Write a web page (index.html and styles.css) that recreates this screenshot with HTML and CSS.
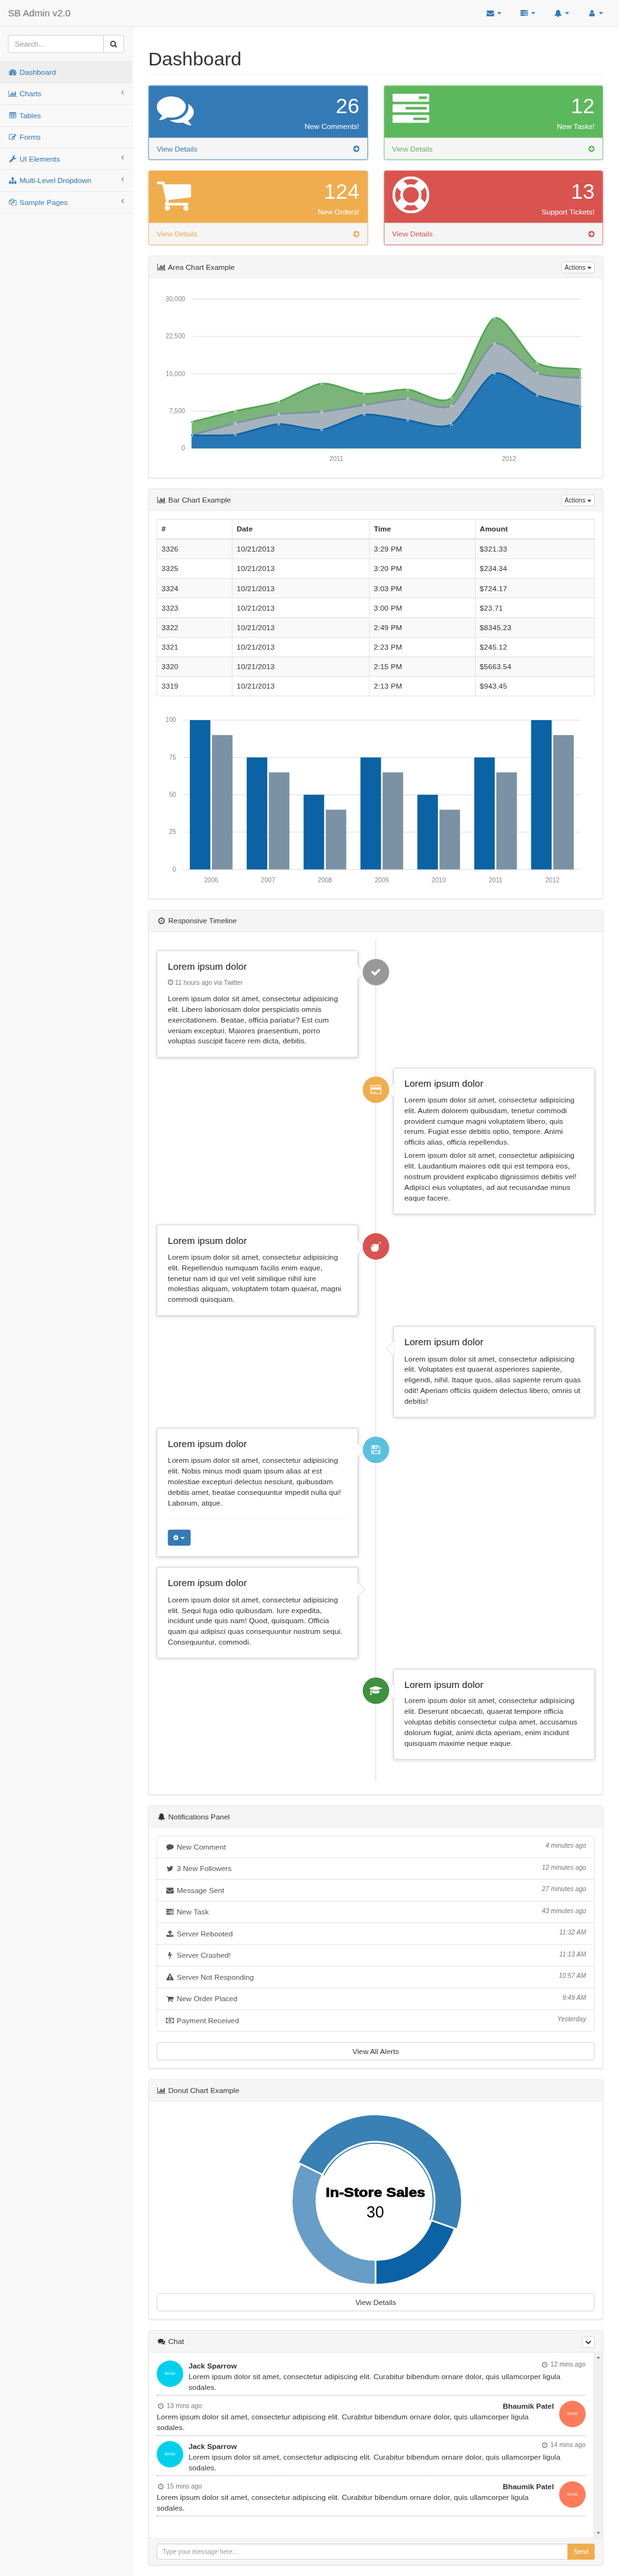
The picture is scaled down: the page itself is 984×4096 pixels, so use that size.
FILE: index.html
```html
<!DOCTYPE html>
<html lang="en">
<head>
<meta charset="utf-8">
<title>SB Admin v2.0</title>
<link rel="stylesheet" href="styles.css">
</head>
<body>
<svg class="sprite" aria-hidden="true">
<symbol id="envelope" viewBox="0 0 1792 1792"><path d="M1792 710v794q0 66-47 113t-113 47h-1472q-66 0-113-47t-47-113v-794q44 49 101 87 362 246 497 345 57 42 92.5 65.5t94.5 48 110 24.5h2q51 0 110-24.5t94.5-48 92.5-65.5q170-123 498-345 57-39 100-87zm0-294q0 79-49 151t-122 123q-376 261-468 325-10 7-42.5 31t-54 38.5-52 32.5-57.5 27-50 9h-2q-23 0-50-9t-57.5-27-52-32.5-54-38.5-42.5-31q-91-64-262-182.5t-205-142.5q-62-42-117-115.5t-55-136.5q0-78 41.5-130t118.5-52h1472q65 0 112.5 47t47.5 113z"/></symbol>
<symbol id="tasks" viewBox="0 0 1792 1792"><path d="M1024 1408h640v-128h-640v128zm-384-512h1024v-128h-1024v128zm640-512h384v-128h-384v128zm512 832v256q0 26-19 45t-45 19h-1664q-26 0-45-19t-19-45v-256q0-26 19-45t45-19h1664q26 0 45 19t19 45zm0-512v256q0 26-19 45t-45 19h-1664q-26 0-45-19t-19-45v-256q0-26 19-45t45-19h1664q26 0 45 19t19 45zm0-512v256q0 26-19 45t-45 19h-1664q-26 0-45-19t-19-45v-256q0-26 19-45t45-19h1664q26 0 45 19t19 45z"/></symbol>
<symbol id="bell" viewBox="0 0 1792 1792"><path d="M912 1696q0-16-16-16-59 0-101.5-42.5t-42.5-101.5q0-16-16-16t-16 16q0 73 51.5 124.5t124.5 51.5q16 0 16-16zm816-288q0 52-38 90t-90 38h-448q0 106-75 181t-181 75-181-75-75-181h-448q-52 0-90-38t-38-90q50-42 91-88t85-119.5 74.5-158.5 50-206 19.5-260q0-152 117-282.5t307-158.5q-8-19-8-39 0-40 28-68t68-28 68 28 28 68q0 20-8 39 190 28 307 158.5t117 282.5q0 139 19.5 260t50 206 74.5 158.5 85 119.5 91 88z"/></symbol>
<symbol id="user" viewBox="0 0 1792 1792"><path d="M1536 1399q0 109-62.5 187t-150.5 78h-854q-88 0-150.5-78t-62.5-187q0-85 8.5-160.5t31.5-152 58.5-131 94-89 134.5-34.5q131 128 313 128t313-128q76 0 134.5 34.5t94 89 58.5 131 31.5 152 8.5 160.5zm-256-887q0 159-112.5 271.5t-271.5 112.5-271.5-112.5-112.5-271.5 112.5-271.5 271.5-112.5 271.5 112.5 112.5 271.5z"/></symbol>
<symbol id="search" viewBox="64 0 1664 1792"><path d="M1216 832q0-185-131.5-316.5t-316.5-131.5-316.5 131.5-131.5 316.5 131.5 316.5 316.5 131.5 316.5-131.5 131.5-316.5zm512 832q0 52-38 90t-90 38q-54 0-90-38l-343-342q-179 124-399 124-143 0-273.5-55.5t-225-150-150-225-55.5-273.5 55.5-273.5 150-225 225-150 273.5-55.5 273.5 55.5 225 150 150 225 55.5 273.5q0 220-124 399l343 343q37 37 37 90z"/></symbol>
<symbol id="dashboard" viewBox="0 0 1792 1792"><path d="M384 1152q0-53-37.5-90.5t-90.5-37.5-90.5 37.5-37.5 90.5 37.5 90.5 90.5 37.5 90.5-37.5 37.5-90.5zm192-448q0-53-37.5-90.5t-90.5-37.5-90.5 37.5-37.5 90.5 37.5 90.5 90.5 37.5 90.5-37.5 37.5-90.5zm428 481l101-382q6-26-7.5-48.5t-38.5-29.5-48 6.5-30 39.5l-101 382q-60 5-107 43.5t-63 98.5q-20 77 20 146t117 89 146-20 89-117q16-60-6-117t-72-91zm660-33q0-53-37.5-90.5t-90.5-37.5-90.5 37.5-37.5 90.5 37.5 90.5 90.5 37.5 90.5-37.5 37.5-90.5zm-640-640q0-53-37.5-90.5t-90.5-37.5-90.5 37.5-37.5 90.5 37.5 90.5 90.5 37.5 90.5-37.5 37.5-90.5zm448 192q0-53-37.5-90.5t-90.5-37.5-90.5 37.5-37.5 90.5 37.5 90.5 90.5 37.5 90.5-37.5 37.5-90.5zm320 448q0 261-141 483-19 29-54 29h-1402q-35 0-54-29-141-221-141-483 0-182 71-348t191-286 286-191 348-71 348 71 286 191 191 286 71 348z"/></symbol>
<symbol id="chart" viewBox="0 0 2048 1792"><path d="M640 1024v384h-256v-384h256zm384-512v896h-256v-896h256zm1024 1024v128h-2048v-1536h128v1408h1920zm-640-768v640h-256v-640h256zm384-384v1024h-256v-1024h256z"/></symbol>
<symbol id="table" viewBox="0 0 1792 1792"><path fill-rule="evenodd" d="M224 128h1344q66 0 113 47t47 113v1088q0 66-47 113t-113 47h-1344q-66 0-113-47t-47-113v-1088q0-66 47-113t113-47zM192 384v256h384v-256zM704 384v256h384v-256zM1216 384v256h384v-256zM192 768v256h384v-256zM704 768v256h384v-256zM1216 768v256h384v-256zM192 1152v256h384v-256zM704 1152v256h384v-256zM1216 1152v256h384v-256z"/></symbol>
<symbol id="edit" viewBox="0 0 1792 1792"><path d="M888 1184l116-116-152-152-116 116v56h96v96h56zm440-720q-16-16-33 1l-350 350q-17 17-1 33t33-1l350-350q17-17 1-33zm80 594v190q0 119-84.5 203.5t-203.5 84.5h-832q-119 0-203.5-84.5t-84.5-203.5v-832q0-119 84.5-203.5t203.5-84.5h832q63 0 117 25 15 7 18 23 3 17-9 29l-49 49q-14 14-32 8-23-6-45-6h-832q-66 0-113 47t-47 113v832q0 66 47 113t113 47h832q66 0 113-47t47-113v-126q0-13 9-22l64-64q15-15 35-7t20 29zm-96-738l288 288-672 672h-288v-288zm444 132l-92 92-288-288 92-92q28-28 68-28t68 28l152 152q28 28 28 68t-28 68z"/></symbol>
<symbol id="wrench" viewBox="0 0 1792 1792"><path d="M448 1472q0-26-19-45t-45-19-45 19-19 45 19 45 45 19 45-19 19-45zm644-420l-682 682q-37 37-90 37-52 0-91-37l-106-108q-38-36-38-90 0-53 38-91l681-681q39 98 114.5 173.5t173.5 114.5zm634-435q0 39-23 106-47 134-164.5 217.5t-258.5 83.5q-185 0-316.5-131.5t-131.5-316.5 131.5-316.5 316.5-131.5q58 0 121.5 16.5t107.5 46.5q16 11 16 28t-16 28l-293 169v224l193 107q5-3 79-48.5t135.5-81 70.5-35.5q15 0 23.5 10t8.5 25z"/></symbol>
<symbol id="sitemap" viewBox="0 0 1792 1792"><path d="M1792 1248v320q0 40-28 68t-68 28h-320q-40 0-68-28t-28-68v-320q0-40 28-68t68-28h96v-192h-512v192h96q40 0 68 28t28 68v320q0 40-28 68t-68 28h-320q-40 0-68-28t-28-68v-320q0-40 28-68t68-28h96v-192h-512v192h96q40 0 68 28t28 68v320q0 40-28 68t-68 28h-320q-40 0-68-28t-28-68v-320q0-40 28-68t68-28h96v-192q0-52 38-90t90-38h512v-192h-96q-40 0-68-28t-28-68v-320q0-40 28-68t68-28h320q40 0 68 28t28 68v320q0 40-28 68t-68 28h-96v192h512q52 0 90 38t38 90v192h96q40 0 68 28t28 68z"/></symbol>
<symbol id="files" viewBox="0 0 1792 1792"><path d="M1696 384q40 0 68 28t28 68v1216q0 40-28 68t-68 28h-960q-40 0-68-28t-28-68v-288h-544q-40 0-68-28t-28-68v-672q0-40 20-88t48-76l408-408q28-28 76-48t88-20h416q40 0 68 28t28 68v328q68-40 128-40h416zm-544 213l-299 299h299v-299zm-640-384l-299 299h299v-299zm196 647l316-316v-416h-384v416q0 40-28 68t-68 28h-416v640h512v-256q0-40 20-88t48-76zm956 804v-1152h-384v416q0 40-28 68t-68 28h-416v640h896z"/></symbol>
<symbol id="angle" viewBox="589 0 640 1792"><path d="M1203 544q0 13-10 23l-393 393 393 393q10 10 10 23t-10 23l-50 50q-10 10-23 10t-23-10l-466-466q-10-10-10-23t10-23l466-466q10-10 23-10t23 10l50 50q10 10 10 23z"/></symbol>
<symbol id="comments" viewBox="0 0 1792 1792"><path d="M1408 768q0 139-94 257t-256.5 186.5-353.5 68.5q-86 0-176-16-124 88-278 128-36 9-86 16h-3q-11 0-20.5-8t-11.5-21q-1-3-1-6.5t.5-6.5 2-6l2.5-5 3.5-5.5 4-5 4.5-5 4-4.5q5-6 23-25t26-29.5 22.5-29 25-38.5 20.5-44q-124-72-195-177t-71-224q0-139 94-257t256.5-186.5 353.5-68.5 353.5 68.5 256.5 186.5 94 257zm384 256q0 120-71 224.5t-195 176.5q10 24 20.5 44t25 38.5 22.5 29 26 29.5 23 25q1 1 4 4.5t4.5 5 4 5 3.5 5.5l2.5 5 2 6 .5 6.5-1 6.5q-3 14-13 22t-22 7q-50-7-86-16-154-40-278-128-90 16-176 16-271 0-472-132 58 4 88 4 161 0 309-45t264-129q125-92 192-212t67-254q0-77-23-152 129 71 204 178t75 230z"/></symbol>
<symbol id="comment" viewBox="0 0 1792 1792"><path d="M1792 896q0 174-120 321.5t-326 233-450 85.5q-70 0-145-8-198 175-460 242-49 14-114 22-17 2-30.5-9t-17.5-29v-1q-3-4-.5-12t2-10 4.5-9.5l6-9 7-8.5 8-9q7-8 31-34.5t34.5-38 31-39.5 32.5-51 27-59 26-76q-157-89-247.5-220t-90.5-281q0-130 71-248.5t191-204.5 286-136.5 348-50.5q244 0 450 85.5t326 233 120 321.5z"/></symbol>
<symbol id="cart" viewBox="64 0 1664 1792"><path d="M704 1536q0 52-38 90t-90 38-90-38-38-90 38-90 90-38 90 38 38 90zm896 0q0 52-38 90t-90 38-90-38-38-90 38-90 90-38 90 38 38 90zm128-1088v512q0 24-16.5 42.5t-40.5 21.5l-1044 122q13 60 13 70 0 16-24 64h920q26 0 45 19t19 45-19 45-45 19h-1024q-26 0-45-19t-19-45q0-11 8-31.5t16-36 21.5-40 15.5-29.5l-177-823h-204q-26 0-45-19t-19-45 19-45 45-19h256q16 0 28.5 6.5t19.5 15.5 13 24.5 8 26 5.5 29.5 4.5 26h1201q26 0 45 19t19 45z"/></symbol>
<symbol id="ring" viewBox="0 0 1792 1792"><path d="M896 0q182 0 348 71t286 191 191 286 71 348-71 348-191 286-286 191-348 71-348-71-286-191-191-286-71-348 71-348 191-286 286-191 348-71zm0 128q-190 0-361 90l194 194q82-28 167-28t167 28l194-194q-171-90-361-90zm-678 1129l194-194q-28-82-28-167t28-167l-194-194q-90 171-90 361t90 361zm678 407q190 0 361-90l-194-194q-82 28-167 28t-167-28l-194 194q171 90 361 90zm0-384q159 0 271.5-112.5t112.5-271.5-112.5-271.5-271.5-112.5-271.5 112.5-112.5 271.5 112.5 271.5 271.5 112.5zm484-217l194 194q90-171 90-361t-90-361l-194 194q28 82 28 167t-28 167z"/></symbol>
<symbol id="go" viewBox="128 0 1536 1792"><path d="M1413 896q0-27-18-45l-91-91-362-362q-18-18-45-18t-45 18l-91 91q-18 18-18 45t18 45l189 189h-502q-26 0-45 19t-19 45v128q0 26 19 45t45 19h502l-189 189q-19 19-19 45t19 45l91 91q18 18 45 18t45-18l362-362 91-91q18-18 18-45zm251 0q0 209-103 385.5t-279.5 279.5-385.5 103-385.5-103-279.5-279.5-103-385.5 103-385.5 279.5-279.5 385.5-103 385.5 103 279.5 279.5 103 385.5z"/></symbol>
<symbol id="clock" viewBox="128 0 1536 1792"><path d="M1024 544v448q0 14-9 23t-23 9h-320q-14 0-23-9t-9-23v-64q0-14 9-23t23-9h224v-352q0-14 9-23t23-9h64q14 0 23 9t9 23zm416 352q0-148-73-273t-198-198-273-73-273 73-198 198-73 273 73 273 198 198 273 73 273-73 198-198 73-273zm224 0q0 209-103 385.5t-279.5 279.5-385.5 103-385.5-103-279.5-279.5-103-385.5 103-385.5 279.5-279.5 385.5-103 385.5 103 279.5 279.5 103 385.5z"/></symbol>
<symbol id="check" viewBox="0 0 1792 1792"><path d="M1671 566q0 40-28 68l-724 724-136 136q-28 28-68 28t-68-28l-136-136-362-362q-28-28-28-68t28-68l136-136q28-28 68-28t68 28l294 295 656-657q28-28 68-28t68 28l136 136q28 28 28 68z"/></symbol>
<symbol id="card" viewBox="0 0 1920 1792"><path d="M1760 128q66 0 113 47t47 113v1216q0 66-47 113t-113 47h-1600q-66 0-113-47t-47-113v-1216q0-66 47-113t113-47h1600zm-1600 128q-13 0-22.5 9.5t-9.5 22.5v224h1664v-224q0-13-9.5-22.5t-22.5-9.5h-1600zm1600 1280q13 0 22.5-9.5t9.5-22.5v-608h-1664v608q0 13 9.5 22.5t22.5 9.5h1600zm-1504-128v-128h256v128h-256zm384 0v-128h384v128h-384z"/></symbol>
<symbol id="bomb" viewBox="0 0 1792 1792"><path d="M571 589q-10-25-34-35t-49 0q-108 44-191 127t-127 191q-10 25 0 49t35 34q13 5 24 5 42 0 60-40 34-84 98.5-148.5t148.5-98.5q25-11 35-35t0-49zm942-356l46 46-244 243 68 68q19 19 19 45.5t-19 45.5l-64 64q89 161 89 343 0 143-55.5 273.5t-150 225-225 150-273.5 55.5-273.5-55.5-225-150-150-225-55.5-273.5 55.5-273.5 150-225 225-150 273.5-55.5q182 0 343 89l64-64q19-19 45.5-19t45.5 19l68 68zm8-56q-10 10-22 10-13 0-23-10l-91-90q-9-10-9-23t9-23q10-9 23-9t23 9l90 91q10 9 10 22.5t-10 22.5zm230 230q-11 9-23 9t-23-9l-90-91q-10-9-10-22.5t10-22.5q9-10 22.5-10t22.5 10l91 90q9 10 9 23t-9 23zm41-183q0 14-9 23t-23 9h-96q-14 0-23-9t-9-23 9-23 23-9h96q14 0 23 9t9 23zm-192-192v96q0 14-9 23t-23 9-23-9-9-23v-96q0-14 9-23t23-9 23 9 9 23zm151 55l-91 90q-10 10-22 10-13 0-23-10-10-9-10-22.5t10-22.5l90-91q10-9 23-9t23 9q9 10 9 23t-9 23z"/></symbol>
<symbol id="floppy" viewBox="0 0 1792 1792"><path d="M512 1536h768v-384h-768v384zm896 0h128v-896q0-14-10-38.5t-20-34.5l-281-281q-10-10-34-20t-39-10v416q0 40-28 68t-68 28h-576q-40 0-68-28t-28-68v-416h-128v1280h128v-416q0-40 28-68t68-28h832q40 0 68 28t28 68v416zm-384-928v-320q0-13-9.5-22.5t-22.5-9.5h-192q-13 0-22.5 9.5t-9.5 22.5v320q0 13 9.5 22.5t22.5 9.5h192q13 0 22.5-9.5t9.5-22.5zm640 32v928q0 40-28 68t-68 28h-1344q-40 0-68-28t-28-68v-1344q0-40 28-68t68-28h928q40 0 88 20t76 48l280 280q28 28 48 76t20 88z"/></symbol>
<symbol id="cap" viewBox="0 0 2304 1792"><path d="M1774 836l18 316q4 69-82 128t-235 93.5-323 34.5-323-34.5-235-93.5-82-128l18-316 574 181q22 7 48 7t48-7zm530-324q0 23-22 31l-1120 352q-4 1-10 1t-10-1l-652-206q-43 34-71 111.5t-34 178.5q63 36 63 109 0 69-58 107l58 433q2 14-8 25-9 11-24 11h-192q-15 0-24-11-10-11-8-25l58-433q-58-38-58-107 0-73 65-111 11-207 98-330l-333-104q-22-8-22-31t22-31l1120-352q4-1 10-1t10 1l1120 352q22 8 22 31z"/></symbol>
<symbol id="gear" viewBox="128 0 1536 1792"><path d="M1152 896q0-106-75-181t-181-75-181 75-75 181 75 181 181 75 181-75 75-181zm512-109v222q0 12-8 23t-20 13l-185 28q-19 54-39 91 35 50 107 138 10 12 10 25t-9 23q-27 37-99 108t-94 71q-12 0-26-9l-138-108q-44 23-91 38-16 136-29 186-7 28-36 28h-222q-14 0-24.5-8.5t-11.5-21.5l-28-184q-49-16-90-37l-141 107q-10 9-25 9-14 0-25-11-126-114-165-168-7-10-7-23 0-12 8-23 15-21 51-66.5t54-70.5q-27-50-41-99l-183-27q-13-2-21-12.5t-8-23.5v-222q0-12 8-23t19-13l186-28q14-46 39-92-40-57-107-138-10-12-10-24 0-10 9-23 26-36 98.5-107.5t94.5-71.5q13 0 26 10l138 107q44-23 91-38 16-136 29-186 7-28 36-28h222q14 0 24.5 8.5t11.5 21.5l28 184q49 16 90 37l142-107q9-9 24-9 13 0 25 10 129 119 165 170 7 8 7 22 0 12-8 23-15 21-51 66.5t-54 70.5q26 50 41 98l183 28q13 2 21 12.5t8 23.5z"/></symbol>
<symbol id="twitter" viewBox="0 0 1792 1792"><path d="M1684 408q-67 98-162 167 1 14 1 42 0 130-38 259.5t-115.5 248.5-184.5 210.5-258 146-323 54.5q-271 0-496-145 35 4 78 4 225 0 401-138-105-2-188-64.5t-114-159.5q33 5 61 5 43 0 85-11-112-23-185.5-111.5t-73.5-205.5v-4q68 38 146 41-66-44-105-115t-39-154q0-88 44-163 121 149 294.5 238.5t371.5 99.5q-8-38-8-74 0-134 94.5-228.5t228.5-94.5q140 0 236 102 109-21 205-78-37 115-142 178 93-10 186-50z"/></symbol>
<symbol id="upload" viewBox="0 0 1792 1792"><path d="M1344 1472q0-26-19-45t-45-19-45 19-19 45 19 45 45 19 45-19 19-45zm256 0q0-26-19-45t-45-19-45 19-19 45 19 45 45 19 45-19 19-45zm128-224v320q0 40-28 68t-68 28h-1472q-40 0-68-28t-28-68v-320q0-40 28-68t68-28h427q21 56 70.5 92t110.5 36h256q61 0 110.5-36t70.5-92h427q40 0 68 28t28 68zm-325-648q-17 40-59 40h-256v448q0 26-19 45t-45 19h-256q-26 0-45-19t-19-45v-448h-256q-42 0-59-40-17-39 14-69l448-448q18-19 45-19t45 19l448 448q31 30 14 69z"/></symbol>
<symbol id="bolt" viewBox="0 0 1792 1792"><path d="M1333 566q18 20 7 44l-540 1157q-13 25-42 25-4 0-14-2-17-5-25.5-19t-4.5-30l197-808-406 101q-4 1-12 1-18 0-31-11-18-15-13-39l201-825q4-14 16-23t28-9h328q19 0 32 12.5t13 29.5q0 8-5 18l-171 463 396-98q8-2 12-2 19 0 34 15z"/></symbol>
<symbol id="warning" viewBox="0 0 1792 1792"><path d="M1024 1375v-190q0-14-9.5-23.5t-22.5-9.5h-192q-13 0-22.5 9.5t-9.5 23.5v190q0 14 9.5 23.5t22.5 9.5h192q13 0 22.5-9.5t9.5-23.5zm-2-374l18-459q0-12-10-19-13-11-24-11h-220q-11 0-24 11-10 7-10 21l17 457q0 10 10 16.5t24 6.5h185q14 0 23.5-6.5t10.5-16.5zm-14-934l768 1408q35 63-2 126-17 29-46.5 46t-63.5 17h-1536q-34 0-63.5-17t-46.5-46q-37-63-2-126l768-1408q17-31 47-49t65-18 65 18 47 49z"/></symbol>
<symbol id="money" viewBox="0 0 1920 1792"><path d="M768 1152h384v-96h-128v-448h-114l-148 137 77 80q42-37 55-57h2v288h-128v96zm512-256q0 70-21 142t-59.5 134-101.5 101-138 39-138-39-101.5-101-59.5-134-21-142 21-142 59.5-134 101.5-101 138-39 138 39 101.5 101 59.5 134 21 142zm512 256v-512q-106 0-181-75t-75-181h-1152q0 106-75 181t-181 75v512q106 0 181 75t75 181h1152q0-106 75-181t181-75zm128-832v1152q0 26-19 45t-45 19h-1792q-26 0-45-19t-19-45v-1152q0-26 19-45t45-19h1792q26 0 45 19t19 45z"/></symbol>
<symbol id="chevron" viewBox="0 0 1792 1792"><path d="M1683 808l-742 741q-19 19-45 19t-45-19l-742-741q-19-19-19-45.5t19-45.5l166-165q19-19 45-19t45 19l531 531 531-531q19-19 45-19t45 19l166 165q19 19 19 45.5t-19 45.5z"/></symbol>
</svg>

<div class="frame">
<div class="page">
  <header class="navbar">
    <a class="brand">SB Admin v2.0</a>
    <nav class="toplinks">
      <a><svg class="ic fw"><use href="#envelope"/></svg><i class="caret"></i></a>
      <a><svg class="ic fw"><use href="#tasks"/></svg><i class="caret"></i></a>
      <a><svg class="ic fw"><use href="#bell"/></svg><i class="caret"></i></a>
      <a><svg class="ic fw"><use href="#user"/></svg><i class="caret"></i></a>
    </nav>
  </header>

  <div class="columns">
    <aside class="sidebar">
      <div class="search"><span class="field">Search...</span><span class="searchbtn"><svg class="ic"><use href="#search"/></svg></span></div>
      <a class="item active"><svg class="ic fw"><use href="#dashboard"/></svg> Dashboard</a>
      <a class="item"><svg class="ic fw"><use href="#chart"/></svg> Charts<svg class="ic arrow"><use href="#angle"/></svg></a>
      <a class="item"><svg class="ic fw"><use href="#table"/></svg> Tables</a>
      <a class="item"><svg class="ic fw"><use href="#edit"/></svg> Forms</a>
      <a class="item"><svg class="ic fw"><use href="#wrench"/></svg> UI Elements<svg class="ic arrow"><use href="#angle"/></svg></a>
      <a class="item"><svg class="ic fw"><use href="#sitemap"/></svg> Multi-Level Dropdown<svg class="ic arrow"><use href="#angle"/></svg></a>
      <a class="item"><svg class="ic fw"><use href="#files"/></svg> Sample Pages<svg class="ic arrow"><use href="#angle"/></svg></a>
    </aside>

    <main class="main">
      <h1>Dashboard</h1>

      <div class="stats">
        <section class="stat blue">
          <div class="stat-top"><svg class="big"><use href="#comments"/></svg><div class="stat-text"><div class="huge">26</div><div>New Comments!</div></div></div>
          <div class="stat-foot"><span>View Details</span><svg class="ic narrow"><use href="#go"/></svg></div>
        </section>
        <section class="stat green">
          <div class="stat-top"><svg class="big"><use href="#tasks"/></svg><div class="stat-text"><div class="huge">12</div><div>New Tasks!</div></div></div>
          <div class="stat-foot"><span>View Details</span><svg class="ic narrow"><use href="#go"/></svg></div>
        </section>
        <section class="stat yellow">
          <div class="stat-top"><svg class="big cart"><use href="#cart"/></svg><div class="stat-text"><div class="huge">124</div><div>New Orders!</div></div></div>
          <div class="stat-foot"><span>View Details</span><svg class="ic narrow"><use href="#go"/></svg></div>
        </section>
        <section class="stat red">
          <div class="stat-top"><svg class="big"><use href="#ring"/></svg><div class="stat-text"><div class="huge">13</div><div>Support Tickets!</div></div></div>
          <div class="stat-foot"><span>View Details</span><svg class="ic narrow"><use href="#go"/></svg></div>
        </section>
      </div>

      <section class="panel">
        <div class="head"><span><svg class="ic fw"><use href="#chart"/></svg> Area Chart Example</span><span class="btn-xs">Actions <i class="caret"></i></span></div>
        <div class="body"><svg class="chart" id="area-chart" viewBox="0 0 826 347"></svg></div>
      </section>

      <section class="panel">
        <div class="head"><span><svg class="ic fw"><use href="#chart"/></svg> Bar Chart Example</span><span class="btn-xs">Actions <i class="caret"></i></span></div>
        <div class="body">
          <table class="orders">
            <colgroup><col class="c1"><col class="c2"><col class="c3"><col class="c4"></colgroup>
            <thead><tr><th>#</th><th>Date</th><th>Time</th><th>Amount</th></tr></thead>
            <tbody>
              <tr><td>3326</td><td>10/21/2013</td><td>3:29 PM</td><td>$321.33</td></tr>
              <tr><td>3325</td><td>10/21/2013</td><td>3:20 PM</td><td>$234.34</td></tr>
              <tr><td>3324</td><td>10/21/2013</td><td>3:03 PM</td><td>$724.17</td></tr>
              <tr><td>3323</td><td>10/21/2013</td><td>3:00 PM</td><td>$23.71</td></tr>
              <tr><td>3322</td><td>10/21/2013</td><td>2:49 PM</td><td>$8345.23</td></tr>
              <tr><td>3321</td><td>10/21/2013</td><td>2:23 PM</td><td>$245.12</td></tr>
              <tr><td>3320</td><td>10/21/2013</td><td>2:15 PM</td><td>$5663.54</td></tr>
              <tr><td>3319</td><td>10/21/2013</td><td>2:13 PM</td><td>$943.45</td></tr>
            </tbody>
          </table>
          <svg class="chart" id="bar-chart" viewBox="0 0 826 347"></svg>
        </div>
      </section>

      <section class="panel">
        <div class="head"><span><svg class="ic fw"><use href="#clock"/></svg> Responsive Timeline</span></div>
        <div class="body">
          <ul class="timeline">
            <li>
              <div class="badge grey"><svg class="ic"><use href="#check"/></svg></div>
              <div class="card"><h4>Lorem ipsum dolor</h4><p class="via"><svg class="ic narrow"><use href="#clock"/></svg> 11 hours ago via Twitter</p>
                <p>Lorem ipsum dolor sit amet, consectetur adipisicing elit. Libero laboriosam dolor perspiciatis omnis exercitationem. Beatae, officia pariatur? Est cum veniam excepturi. Maiores praesentium, porro voluptas suscipit facere rem dicta, debitis.</p></div>
            </li>
            <li class="right">
              <div class="badge warn"><svg class="ic wide"><use href="#card"/></svg></div>
              <div class="card"><h4>Lorem ipsum dolor</h4>
                <p>Lorem ipsum dolor sit amet, consectetur adipisicing elit. Autem dolorem quibusdam, tenetur commodi provident cumque magni voluptatem libero, quis rerum. Fugiat esse debitis optio, tempore. Animi officiis alias, officia repellendus.</p>
                <p>Lorem ipsum dolor sit amet, consectetur adipisicing elit. Laudantium maiores odit qui est tempora eos, nostrum provident explicabo dignissimos debitis vel! Adipisci eius voluptates, ad aut recusandae minus eaque facere.</p></div>
            </li>
            <li>
              <div class="badge danger"><svg class="ic"><use href="#bomb"/></svg></div>
              <div class="card"><h4>Lorem ipsum dolor</h4>
                <p>Lorem ipsum dolor sit amet, consectetur adipisicing elit. Repellendus numquam facilis enim eaque,<br>tenetur nam id qui vel velit similique nihil iure<br>molestias aliquam, voluptatem totam quaerat, magni commodi quisquam.</p></div>
            </li>
            <li class="right">
              <div class="card"><h4>Lorem ipsum dolor</h4>
                <p>Lorem ipsum dolor sit amet, consectetur adipisicing elit. Voluptates est quaerat asperiores sapiente, eligendi, nihil. Itaque quos, alias sapiente rerum quas odit! Aperiam officiis quidem delectus libero, omnis ut debitis!</p></div>
            </li>
            <li>
              <div class="badge info"><svg class="ic"><use href="#floppy"/></svg></div>
              <div class="card"><h4>Lorem ipsum dolor</h4>
                <p>Lorem ipsum dolor sit amet, consectetur adipisicing elit. Nobis minus modi quam ipsum alias at est molestiae excepturi delectus nesciunt, quibusdam debitis amet, beatae consequuntur impedit nulla qui! Laborum, atque.</p>
                <hr><span class="gearbtn"><svg class="ic narrow"><use href="#gear"/></svg> <i class="caret"></i></span></div>
            </li>
            <li>
              <div class="card"><h4>Lorem ipsum dolor</h4>
                <p>Lorem ipsum dolor sit amet, consectetur adipisicing elit. Sequi fuga odio quibusdam. Iure expedita, incidunt unde quis nam! Quod, quisquam. Officia quam qui adipisci quas consequuntur nostrum sequi. Consequuntur, commodi.</p></div>
            </li>
            <li class="right">
              <div class="badge success"><svg class="ic wider"><use href="#cap"/></svg></div>
              <div class="card"><h4>Lorem ipsum dolor</h4>
                <p>Lorem ipsum dolor sit amet, consectetur adipisicing elit. Deserunt obcaecati, quaerat tempore officia voluptas debitis consectetur culpa amet, accusamus dolorum fugiat, animi dicta aperiam, enim incidunt quisquam maxime neque eaque.</p></div>
            </li>
          </ul>
        </div>
      </section>

      <section class="panel">
        <div class="head"><span><svg class="ic fw"><use href="#bell"/></svg> Notifications Panel</span></div>
        <div class="body">
          <div class="list">
            <div class="row"><span><svg class="ic fw"><use href="#comment"/></svg> New Comment</span><em>4 minutes ago</em></div>
            <div class="row"><span><svg class="ic fw"><use href="#twitter"/></svg> 3 New Followers</span><em>12 minutes ago</em></div>
            <div class="row"><span><svg class="ic fw"><use href="#envelope"/></svg> Message Sent</span><em>27 minutes ago</em></div>
            <div class="row"><span><svg class="ic fw"><use href="#tasks"/></svg> New Task</span><em>43 minutes ago</em></div>
            <div class="row"><span><svg class="ic fw"><use href="#upload"/></svg> Server Rebooted</span><em>11:32 AM</em></div>
            <div class="row"><span><svg class="ic fw"><use href="#bolt"/></svg> Server Crashed!</span><em>11:13 AM</em></div>
            <div class="row"><span><svg class="ic fw"><use href="#warning"/></svg> Server Not Responding</span><em>10:57 AM</em></div>
            <div class="row"><span><svg class="ic fw"><use href="#cart"/></svg> New Order Placed</span><em>9:49 AM</em></div>
            <div class="row"><span><svg class="ic fw"><use href="#money"/></svg> Payment Received</span><em>Yesterday</em></div>
          </div>
          <a class="btn-block">View All Alerts</a>
        </div>
      </section>

      <section class="panel">
        <div class="head"><span><svg class="ic fw"><use href="#chart"/></svg> Donut Chart Example</span></div>
        <div class="body">
          <svg class="chart" id="donut-chart" viewBox="0 0 826 347"></svg>
          <a class="btn-block">View Details</a>
        </div>
      </section>

      <section class="panel">
        <div class="head"><span><svg class="ic fw"><use href="#comments"/></svg> Chat</span><span class="btn-xs"><svg class="ic"><use href="#chevron"/></svg></span></div>
        <div class="chatwrap">
          <div class="chat">
            <div class="msg">
              <div class="avatar cyan">50×50</div>
              <div class="talk"><div class="who"><strong>Jack Sparrow</strong><small><svg class="ic fw"><use href="#clock"/></svg> 12 mins ago</small></div><p>Lorem ipsum dolor sit amet, consectetur adipiscing elit. Curabitur bibendum ornare dolor, quis ullamcorper ligula<br>sodales.</p></div>
            </div>
            <div class="msg">
              <div class="talk"><div class="who mine"><small><svg class="ic fw"><use href="#clock"/></svg> 13 mins ago</small><strong>Bhaumik Patel</strong></div><p>Lorem ipsum dolor sit amet, consectetur adipiscing elit. Curabitur bibendum ornare dolor, quis ullamcorper ligula<br>sodales.</p></div>
              <div class="avatar coral">50×50</div>
            </div>
            <div class="msg">
              <div class="avatar cyan">50×50</div>
              <div class="talk"><div class="who"><strong>Jack Sparrow</strong><small><svg class="ic fw"><use href="#clock"/></svg> 14 mins ago</small></div><p>Lorem ipsum dolor sit amet, consectetur adipiscing elit. Curabitur bibendum ornare dolor, quis ullamcorper ligula<br>sodales.</p></div>
            </div>
            <div class="msg">
              <div class="talk"><div class="who mine"><small><svg class="ic fw"><use href="#clock"/></svg> 15 mins ago</small><strong>Bhaumik Patel</strong></div><p>Lorem ipsum dolor sit amet, consectetur adipiscing elit. Curabitur bibendum ornare dolor, quis ullamcorper ligula<br>sodales.</p></div>
              <div class="avatar coral">50×50</div>
            </div>
          </div>
          <div class="scrollbar"><i class="up"></i><i class="down"></i></div>
        </div>
        <div class="chatfoot"><span class="field">Type your message here...</span><span class="send">Send</span></div>
      </section>
    </main>
  </div>
</div>
</div>
<script src="charts.js"></script>
</body>
</html>
```
FILE: styles.css
```css
* { box-sizing: border-box; }
html, body { margin: 0; padding: 0; overflow: hidden; }
body { background: #fff; font-family: "Liberation Sans", Arial, sans-serif; font-size: 14px; line-height: 20px; color: #333; }
.sprite { display: none; }
.frame { width: 984px; height: 4096px; overflow: hidden; }
.page { width: 1169px; height: 4865px; display: flex; flex-direction: column; background: #f8f8f8; transform: scale(.84174, .84193); transform-origin: 0 0; }

.ic { display: inline-block; width: 1em; height: 1em; vertical-align: -.143em; fill: currentColor; }
.fw { width: 1.2857em; }
.narrow { width: .857em; }
.wide { width: 1.0714em; }
.wider { width: 1.2857em; }
.caret { display: inline-block; border: 4px solid transparent; border-top-color: currentColor; border-bottom: 0; vertical-align: middle; }

.navbar { height: 51px; flex: none; display: flex; justify-content: space-between; border-bottom: 1px solid #e7e7e7; padding: 0 15px; }
.brand { font-size: 18px; line-height: 50px; color: #777; }
.toplinks { display: flex; gap: 4px; color: #337ab7; }
.toplinks a { display: flex; align-items: center; gap: 4px; padding: 0 15px; }

.columns { flex: 1; display: flex; }
.sidebar { width: 250px; color: #337ab7; }
.search { display: flex; padding: 15px; border-bottom: 1px solid #e7e7e7; }
.field { flex: 1; background: #fff; border: 1px solid #ccc; color: #999; box-shadow: inset 0 1px 1px rgba(0,0,0,.075); border-radius: 4px 0 0 4px; }
.search .field { height: 34px; padding: 6px 12px; }
.searchbtn { width: 39px; height: 34px; margin-left: -1px; background: #fff; border: 1px solid #ccc; border-radius: 0 4px 4px 0; color: #333; padding: 6px 12px; }
.searchbtn .ic { width: .9286em; }
.item { display: block; height: 41px; padding: 10px 15px; border-bottom: 1px solid #e7e7e7; }
.active { background: #eee; }
.arrow { float: right; width: 5px; }

.main { flex: 1; background: #fff; border-left: 1px solid #e7e7e7; padding: 0 30px; }
h1 { margin: 40px 0 20px; padding-bottom: 9px; border-bottom: 1px solid #eee; font-size: 36px; line-height: 39.6px; font-weight: 400; }

.stats { display: grid; grid-template-columns: 1fr 1fr; column-gap: 30px; row-gap: 20px; margin-bottom: 20px; }
.stat { border: 1px solid; border-radius: 4px; height: 141.14px; overflow: hidden; background: #f5f5f5; box-shadow: 0 1px 1px rgba(0,0,0,.05); }
.stat-top { display: flex; justify-content: space-between; height: 98.14px; padding: 10px 15px; background: currentColor; }
.stat-text { color: #fff; text-align: right; }
.huge { font-size: 40px; line-height: 57.14px; }
.big { width: 70px; height: 70px; fill: #fff; }
.big.cart { width: 65px; }
.stat-foot { display: flex; justify-content: space-between; padding: 10px 15px; border-top: 1px solid #ddd; }
.stat-foot .ic { margin-top: 3px; }
.blue { color: #337ab7; }
.green { color: #5cb85c; }
.yellow { color: #f0ad4e; }
.red { color: #d9534f; }

.panel { border: 1px solid #ddd; border-radius: 4px; margin-bottom: 20px; box-shadow: 0 1px 1px rgba(0,0,0,.05); background: #fff; }
.head { display: flex; justify-content: space-between; height: 41px; padding: 10px 15px; background: #f5f5f5; border-bottom: 1px solid #ddd; border-radius: 3px 3px 0 0; }
.btn-xs { height: 22px; padding: 1px 5px; border: 1px solid #ccc; border-radius: 3px; background: #fff; font-size: 12px; line-height: 18px; }
.body { padding: 15px; }
.chart { display: block; width: 826px; height: 347px; overflow: visible; }
.axis { font-size: 12px; fill: #888; }
.grid { stroke: #aaa; stroke-width: .5; }

.orders { width: 826px; table-layout: fixed; border-collapse: collapse; margin-bottom: 20px; }
.orders th, .orders td { border: 1px solid #ddd; padding: 8px; text-align: left; }
.orders td { letter-spacing: .18px; }
.orders th { border-bottom-width: 2px; }
.orders tbody tr:nth-child(odd) { background: #f9f9f9; }
.c1 { width: 142px; }
.c2 { width: 259px; }
.c3 { width: 200px; }
.c4 { width: 225px; }

.timeline { position: relative; list-style: none; margin: 0 0 10px; padding: 20px 0 20.6px; background: linear-gradient(#eee, #eee) center / 3px 100% no-repeat; }
.timeline li { position: relative; display: flex; margin-bottom: 20px; }
.timeline li.right { justify-content: flex-end; }
.card { position: relative; width: 46%; padding: 20px; border: 1px solid #d4d4d4; border-radius: 2px; background: #fff; box-shadow: 0 1px 6px rgba(0,0,0,.175); }
.card::before, .card::after { content: ""; position: absolute; border-style: solid; border-color: transparent; }
.card::before { top: 26px; right: -15px; border-width: 15px 0 15px 15px; border-left-color: #ccc; }
.card::after { top: 27px; right: -14px; border-width: 14px 0 14px 14px; border-left-color: #fff; }
.right .card::before { right: auto; left: -15px; border-width: 15px 15px 15px 0; border-right-color: #ccc; }
.right .card::after { right: auto; left: -14px; border-width: 14px 14px 14px 0; border-right-color: #fff; }
.card h4 { margin: 0 0 10px; font-size: 18px; line-height: 19.8px; font-weight: 400; -webkit-text-stroke: .2px; }
.card p { margin: 0; letter-spacing: .06px; }
.card p + p { margin-top: 5px; }
.card .via { font-size: 12px; color: #777; }
.card .via + p { margin-top: 10px; }
.badge { position: absolute; z-index: 2; top: 16px; left: 50%; width: 50px; height: 50px; margin-left: -25px; border-radius: 50%; color: #fff; font-size: 19.6px; display: flex; align-items: center; justify-content: center; }
.grey { background: #999; }
.warn { background: #f0ad4e; }
.danger { background: #d9534f; }
.info { background: #5bc0de; }
.success { background: #3f903f; }
.card hr { border: 0; border-top: 1px solid #eee; margin: 20px 0; }
.gearbtn { display: block; width: 43px; height: 30px; padding: 5px 9px; font-size: 12px; line-height: 18px; white-space: nowrap; color: #fff; background: #337ab7; border: 1px solid #2e6da4; border-radius: 3px; }

.list { border: 1px solid #ddd; border-radius: 4px; margin-bottom: 20px; color: #555; }
.row { display: flex; justify-content: space-between; align-items: flex-start; height: 41px; padding: 10px 15px; border-bottom: 1px solid #ddd; }
.row:last-child { height: 40px; border-bottom: 0; }
.row em { font-size: 12px; line-height: 17px; color: #777; letter-spacing: .1px; }
.btn-block { display: block; height: 34px; padding: 6px 12px; border: 1px solid #ccc; border-radius: 4px; text-align: center; }

.chatwrap { display: flex; height: 350px; }
.chat { flex: 1; padding: 15px; }
.msg { display: flex; gap: 10px; height: 66px; margin-bottom: 10px; border-bottom: 1px dotted #999; }
.avatar { flex: none; width: 50px; height: 50px; border-radius: 50%; color: #fff; font-size: 7px; line-height: 50px; text-align: center; }
.cyan { background: #00d0ee; }
.coral { background: #ff7b5a; }
.talk { flex: 1; }
.talk p { margin: 0; letter-spacing: .08px; white-space: nowrap; }
.who { display: flex; justify-content: space-between; height: 20px; }
.who small { font-size: 12px; line-height: 17px; color: #777; letter-spacing: .1px; }
.who.mine small { line-height: 21px; }
.scrollbar { width: 17px; display: flex; flex-direction: column; justify-content: space-between; align-items: center; padding: 7px 0; background: #f0f0f0; border-left: 1px solid #e4e4e4; }
.scrollbar i { border: 3.5px solid transparent; }
.scrollbar .up { border-top: 0; border-bottom: 4px solid #777; }
.scrollbar .down { border-bottom: 0; border-top: 4px solid #777; }
.chatfoot { display: flex; padding: 10px 15px; background: #f5f5f5; border-top: 1px solid #ddd; border-radius: 0 0 3px 3px; font-size: 12px; line-height: 18px; }
.chatfoot .field { height: 30px; padding: 5px 10px; border-radius: 3px 0 0 3px; }
.send { width: 51px; height: 30px; margin-left: -1px; padding: 5px 0; text-align: center; color: #fff; background: #f0ad4e; border: 1px solid #eea236; border-radius: 0 3px 3px 0; }

.donut-label { font-size: 24px; font-weight: 700; stroke: #000; stroke-width: 1px; text-anchor: middle; fill: #000; }
.donut-value { font-size: 30px; text-anchor: middle; fill: #000; }
```
FILE: charts.js
```js
(function () {
  var BASE = 307, TOP = 25, RIGHT = 801;

  function add(parent, tag, attrs, text) {
    var el = document.createElementNS('http://www.w3.org/2000/svg', tag);
    for (var k in attrs) el.setAttribute(k, attrs[k]);
    if (text !== undefined) el.textContent = text;
    parent.appendChild(el);
    return el;
  }

  function axes(svg, left, labels) {
    labels.forEach(function (label, i) {
      var y = BASE - (BASE - TOP) * i / 4;
      add(svg, 'line', { x1: left, x2: RIGHT, y1: y, y2: y, 'class': 'grid' });
      add(svg, 'text', { x: left - 12.5, y: y + 4, 'text-anchor': 'end', 'class': 'axis' }, label);
    });
  }

  // Slope at each point, taken from its neighbours
  function slopes(pts) {
    return pts.map(function (p, i) {
      var a = pts[i - 1] || p, b = pts[i + 1] || p;
      return (b[1] - a[1]) / (b[0] - a[0]);
    });
  }

  function curve(pts) {
    var g = slopes(pts), d = 'M' + pts[0];
    for (var i = 1; i < pts.length; i++) {
      var a = pts[i - 1], b = pts[i], ix = (b[0] - a[0]) / 4;
      d += 'C' + [a[0] + ix, Math.min(BASE, a[1] + ix * g[i - 1]), b[0] - ix, Math.min(BASE, b[1] - ix * g[i]), b[0], b[1]];
    }
    return d;
  }

  // Area chart
  var area = document.getElementById('area-chart');
  var left = 66;
  axes(area, left, ['0', '7,500', '15,000', '22,500', '30,000']);
  var days = [0, 92, 184, 275, 365, 457, 549, 640, 731, 823];
  function dayX(d) { return left + (RIGHT - left) * d / 823; }
  var series = [
    [2666, 2778, 4912, 3767, 6810, 5670, 4820, 15073, 10687, 8432],
    [0, 2294, 1969, 3597, 1914, 4293, 3795, 5967, 4460, 5713],
    [2647, 2441, 2501, 5689, 2293, 1881, 1588, 5175, 2028, 1791]
  ];
  var sums = days.map(function () { return 0; });
  var lines = series.map(function (s) {
    return s.map(function (v, i) {
      sums[i] += v;
      return [dayX(days[i]), BASE - sums[i] * (BASE - TOP) / 30000];
    });
  });
  var fills = ['#2577b5', '#a7b3bc', '#7cb47c'];
  var strokes = ['#0b62a4', '#7a92a3', '#4da74d'];
  [2, 1, 0].forEach(function (i) {
    add(area, 'path', { d: curve(lines[i]) + 'L' + RIGHT + ' ' + BASE + 'L' + left + ' ' + BASE + 'Z', fill: fills[i] });
    add(area, 'path', { d: curve(lines[i]), fill: 'none', stroke: strokes[i], 'stroke-width': 3 });
  });
  [2, 1, 0].forEach(function (i) {
    lines[i].forEach(function (p) {
      add(area, 'circle', { cx: p[0], cy: p[1], r: 2, fill: strokes[i], stroke: '#fff', 'stroke-width': 1 });
    });
  });
  add(area, 'text', { x: dayX(306), y: 331, 'text-anchor': 'middle', 'class': 'axis' }, '2011');
  add(area, 'text', { x: dayX(671), y: 331, 'text-anchor': 'middle', 'class': 'axis' }, '2012');

  // Bar chart
  var bars = document.getElementById('bar-chart');
  left = 49.1;
  axes(bars, left, ['0', '25', '50', '75', '100']);
  var group = (RIGHT - left) / 7, width = (group * 0.75 - 3) / 2;
  [[100, 90], [75, 65], [50, 40], [75, 65], [50, 40], [75, 65], [100, 90]].forEach(function (pair, i) {
    var x = left + group * i;
    pair.forEach(function (v, j) {
      var h = v * (BASE - TOP) / 100;
      add(bars, 'rect', { x: x + group * 0.125 + j * (width + 3), y: BASE - h, width: width, height: h, fill: strokes[j] });
    });
    add(bars, 'text', { x: x + group / 2, y: 331, 'text-anchor': 'middle', 'class': 'axis' }, String(2006 + i));
  });

  // Donut chart
  var donut = document.getElementById('donut-chart');
  var cx = 413.2, cy = 172.5, w = 54.4;
  var gap = 5 / (2 * w), round = 1.9999 * Math.PI - gap * 3, at = 0;
  function pt(r, a) { return (cx + r * Math.sin(a)) + ' ' + (cy + r * Math.cos(a)); }
  [[12, '#0b62a4'], [30, '#3980b5'], [20, '#679dc6']].forEach(function (s, i) {
    var end = at + gap + round * s[0] / 62, big = end - at > Math.PI ? 1 : 0;
    var ri = w * 2 + 3, ro = i === 1 ? w * 3 : w * 3 - 5;
    add(donut, 'path', {
      d: 'M' + pt(ri, at) + 'A' + [ri, ri, 0, big, 0] + ' ' + pt(ri, end) + 'L' + pt(ro, end) + 'A' + [ro, ro, 0, big, 1] + ' ' + pt(ro, at) + 'Z',
      fill: s[1], stroke: '#fff', 'stroke-width': 3
    });
    if (i === 1) {
      add(donut, 'path', { d: 'M' + pt(w * 2, at) + 'A' + [w * 2, w * 2, 0, big, 0] + ' ' + pt(w * 2, end), fill: 'none', stroke: s[1], 'stroke-width': 2 });
    }
    at = end;
  });
  add(donut, 'text', { x: cx, y: 164.6, 'class': 'donut-label', textLength: 188, lengthAdjust: 'spacingAndGlyphs' }, 'In-Store Sales');
  add(donut, 'text', { x: cx - 0.5, y: 203.5, 'class': 'donut-value' }, '30');
})();
```
